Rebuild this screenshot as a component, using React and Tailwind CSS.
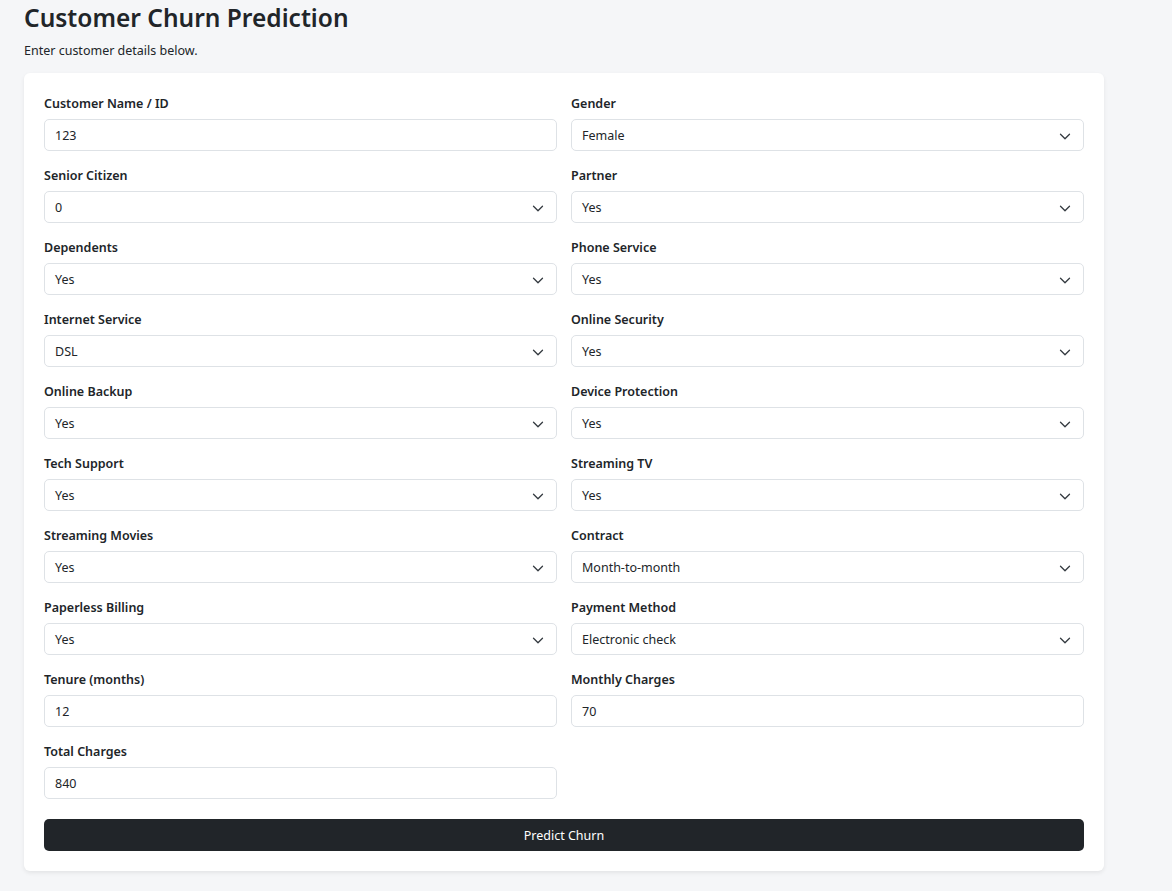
import React from 'react';

const fields = [
  { label: 'Customer Name / ID', type: 'input', value: '123' },
  { label: 'Gender', type: 'select', value: 'Female' },
  { label: 'Senior Citizen', type: 'select', value: '0' },
  { label: 'Partner', type: 'select', value: 'Yes' },
  { label: 'Dependents', type: 'select', value: 'Yes' },
  { label: 'Phone Service', type: 'select', value: 'Yes' },
  { label: 'Internet Service', type: 'select', value: 'DSL' },
  { label: 'Online Security', type: 'select', value: 'Yes' },
  { label: 'Online Backup', type: 'select', value: 'Yes' },
  { label: 'Device Protection', type: 'select', value: 'Yes' },
  { label: 'Tech Support', type: 'select', value: 'Yes' },
  { label: 'Streaming TV', type: 'select', value: 'Yes' },
  { label: 'Streaming Movies', type: 'select', value: 'Yes' },
  { label: 'Contract', type: 'select', value: 'Month-to-month' },
  { label: 'Paperless Billing', type: 'select', value: 'Yes' },
  { label: 'Payment Method', type: 'select', value: 'Electronic check' },
  { label: 'Tenure (months)', type: 'input', value: '12' },
  { label: 'Monthly Charges', type: 'input', value: '70' },
  { label: 'Total Charges', type: 'input', value: '840' },
];

function Chevron() {
  return (
    <svg width="12" height="9" viewBox="0 0 16 12" fill="none" className="shrink-0 mr-[2px]">
      <path d="m2 3 6 6 6-6" stroke="#343a40" strokeWidth="1.7" strokeLinecap="round" strokeLinejoin="round" />
    </svg>
  );
}

function Field({ label, type, value }) {
  return (
    <div className="flex flex-col">
      <label className="font-semibold leading-[20px] pt-[1px] mb-[5px]">{label}</label>
      <div className="h-[32px] rounded-[5px] border border-[#dee2e6] bg-white flex items-center justify-between pl-[10px] pr-[10px] pt-[2px]">
        <span className="leading-[20px]">{value}</span>
        {type === 'select' && <Chevron />}
      </div>
    </div>
  );
}

export default function App() {
  return (
    <div
      className="min-h-[891px] bg-[#f5f6f8] text-[#212529] text-[12.5px] pl-[24px]"
      style={{ fontFamily: '"Noto Sans", "Open Sans", sans-serif' }}
    >
      <div className="w-[1080px]">
        <h2 className="text-[24.5px] font-semibold leading-[34px] pt-[1px] mb-[5px]">Customer Churn Prediction</h2>
        <p className="leading-[20px] pt-[1px] mb-[12px]">Enter customer details below.</p>
        <div className="bg-white rounded-[6px] shadow-[0_2px_4px_rgba(0,0,0,0.075)] p-[20px]">
          <div className="grid grid-cols-2 gap-x-[14px] gap-y-[14px]">
            {fields.map((f) => (
              <Field key={f.label} {...f} />
            ))}
          </div>
          <button className="mt-[20px] w-full h-[32px] rounded-[5px] bg-[#212529] text-white leading-[20px] pt-[2px]">
            Predict Churn
          </button>
        </div>
      </div>
    </div>
  );
}
